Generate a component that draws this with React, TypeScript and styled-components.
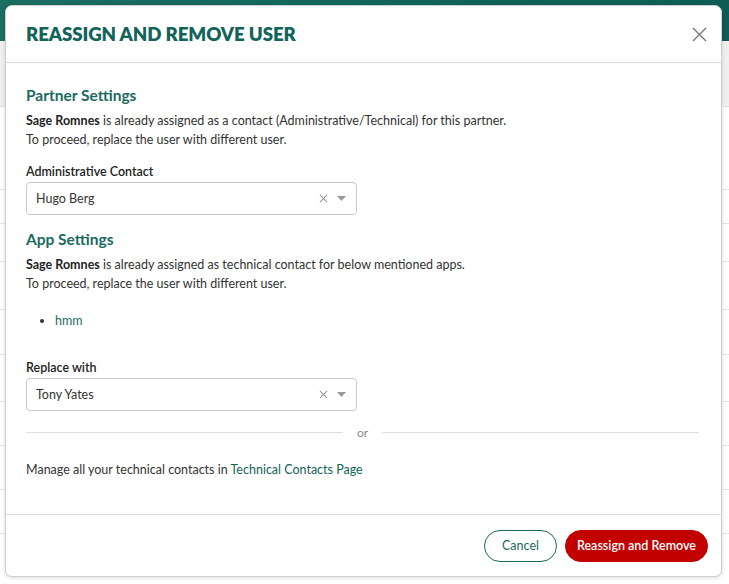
import React from 'react'
import styled, { createGlobalStyle } from 'styled-components'

const GlobalStyle = createGlobalStyle`
  html, body {
    margin: 0;
    padding: 0;
    background: #ffffff;
    font-family: Lato, "Open Sans", Arial, sans-serif;
    color: #333;
  }
  * { box-sizing: border-box; }
`

const Page = styled.div`
  position: relative;
  width: 729px;
  height: 584px;
  overflow: hidden;
  background: #fff;
`

const TopBar = styled.div`
  height: 41px;
  background: linear-gradient(90deg, #1b6e60 0%, #0f6358 60%, #0e5d55 100%);
`

const SubBar = styled.div`
  height: 66px;
  background: #f0f0f0;
  border-bottom: 1px solid #e2e2e2;
`

const TableRow = styled.div<{ $h: number }>`
  height: ${(p) => p.$h}px;
  border-bottom: 1px solid #e4e4e4;
`

const Overlay = styled.div`
  position: absolute;
  inset: 0;
  padding: 5px 7px 7px 5px;
`

const Modal = styled.div`
  height: 100%;
  background: #fff;
  border: 1px solid #cfcfcf;
  border-radius: 7px;
  display: flex;
  flex-direction: column;
  box-shadow: 0 1px 4px rgba(0, 0, 0, 0.15);
`

const Header = styled.div`
  height: 57px;
  display: flex;
  align-items: center;
  justify-content: space-between;
  padding: 0 12px 0 20px;
  border-bottom: 1px solid #dcdcdc;
`

const Title = styled.h2`
  margin: 0;
  font-size: 18.7px;
  font-weight: 800;
  color: #12635a;
  letter-spacing: -0.1px;
`

const CloseBtn = styled.button`
  border: none;
  background: none;
  padding: 0;
  width: 20px;
  height: 20px;
  display: flex;
  align-items: center;
  justify-content: center;
  cursor: pointer;
`

const Body = styled.div`
  flex: 1;
  padding: 23px 22px 0 20px;
`

const SectionTitle = styled.h3`
  margin: 0 0 7px;
  font-size: 15.5px;
  font-weight: 700;
  color: #1a6a5f;
`

const Text = styled.p`
  margin: 0;
  font-size: 12.5px;
  line-height: 19px;
  color: #333;

  b { font-weight: 700; color: #222; }
`

const Label = styled.div`
  margin-top: 14px;
  font-size: 12.5px;
  font-weight: 600;
  color: #222;
  line-height: 18px;
`

const Select = styled.div`
  margin-top: 1px;
  width: 331px;
  height: 33px;
  border: 1px solid #c9c9c9;
  border-radius: 4px;
  display: flex;
  align-items: center;
  padding: 0 10px 0 9px;
  font-size: 12.5px;
  color: #333;
`

const SelectValue = styled.span`
  flex: 1;
`

const SelectIcons = styled.span`
  display: flex;
  align-items: center;
  gap: 9px;
`

const AppBlock = styled.div`
  margin-top: 15px;
`

const List = styled.ul`
  margin: 19px 0 0;
  padding-left: 29px;
  font-size: 12.5px;
  line-height: 18px;

  li { color: #1a6a5f; }
  li::marker { color: #333; }
`

const ReplaceBlock = styled.div`
  margin-top: 29px;
`

const Divider = styled.div`
  margin-top: 14px;
  display: flex;
  align-items: center;
  gap: 14px;
  font-size: 12px;
  color: #888;

  &::before, &::after {
    content: '';
    flex: 1;
    height: 1px;
    background: #dedede;
  }
`

const Manage = styled(Text)`
  margin-top: 20px;
`

const Link = styled.a`
  color: #12635a;
  text-decoration: none;
`

const Footer = styled.div`
  height: 62px;
  margin-top: auto;
  border-top: 1px solid #dcdcdc;
  display: flex;
  align-items: center;
  justify-content: flex-end;
  gap: 8px;
  padding: 0 13px 0 0;
`

const Button = styled.button<{ $primary?: boolean }>`
  height: 32px;
  border-radius: 16px;
  font-family: Lato, "Open Sans", Arial, sans-serif;
  font-size: 12.5px;
  padding: 0 ${(p) => (p.$primary ? '11px' : '17px')};
  border: 1px solid ${(p) => (p.$primary ? '#c20000' : '#1a6a5f')};
  background: ${(p) => (p.$primary ? '#c20000' : '#fff')};
  color: ${(p) => (p.$primary ? '#fff' : '#1a6a5f')};
  font-weight: ${(p) => (p.$primary ? 600 : 400)};
  cursor: pointer;
`

const Clear = () => (
  <svg width="9" height="9" viewBox="0 0 10 10">
    <path d="M1 1L9 9M9 1L1 9" stroke="#999" strokeWidth="1.2" />
  </svg>
)

const Caret = () => (
  <svg width="9" height="5" viewBox="0 0 9 5">
    <path d="M0 0H9L4.5 5Z" fill="#999" />
  </svg>
)

const SelectBox = ({ value }: { value: string }) => (
  <Select>
    <SelectValue>{value}</SelectValue>
    <SelectIcons>
      <Clear />
      <Caret />
    </SelectIcons>
  </Select>
)

const App: React.FC = () => {
  return (
    <>
      <GlobalStyle />
      <Page>
        <TopBar />
        <SubBar />
        {[83, 34, 38, 48, 45, 47, 44, 44, 44].map((h, i) => (
          <TableRow key={i} $h={h} />
        ))}
        <Overlay>
          <Modal>
            <Header>
              <Title>REASSIGN AND REMOVE USER</Title>
              <CloseBtn aria-label="Close">
                <svg width="15" height="15" viewBox="0 0 15 15">
                  <path d="M1 1L14 14M14 1L1 14" stroke="#777" strokeWidth="1.4" />
                </svg>
              </CloseBtn>
            </Header>
            <Body>
              <SectionTitle>Partner Settings</SectionTitle>
              <Text>
                <b>Sage Romnes</b> is already assigned as a contact (Administrative/Technical) for this partner.
              </Text>
              <Text>To proceed, replace the user with different user.</Text>
              <Label>Administrative Contact</Label>
              <SelectBox value="Hugo Berg" />

              <AppBlock>
                <SectionTitle>App Settings</SectionTitle>
                <Text>
                  <b>Sage Romnes</b> is already assigned as technical contact for below mentioned apps.
                </Text>
                <Text>To proceed, replace the user with different user.</Text>
                <List>
                  <li>hmm</li>
                </List>
              </AppBlock>

              <ReplaceBlock>
                <Label>Replace with</Label>
                <SelectBox value="Tony Yates" />
              </ReplaceBlock>

              <Divider>or</Divider>

              <Manage>
                Manage all your technical contacts in <Link href="#">Technical Contacts Page</Link>
              </Manage>
            </Body>
            <Footer>
              <Button>Cancel</Button>
              <Button $primary>Reassign and Remove</Button>
            </Footer>
          </Modal>
        </Overlay>
      </Page>
    </>
  )
}

export default App
